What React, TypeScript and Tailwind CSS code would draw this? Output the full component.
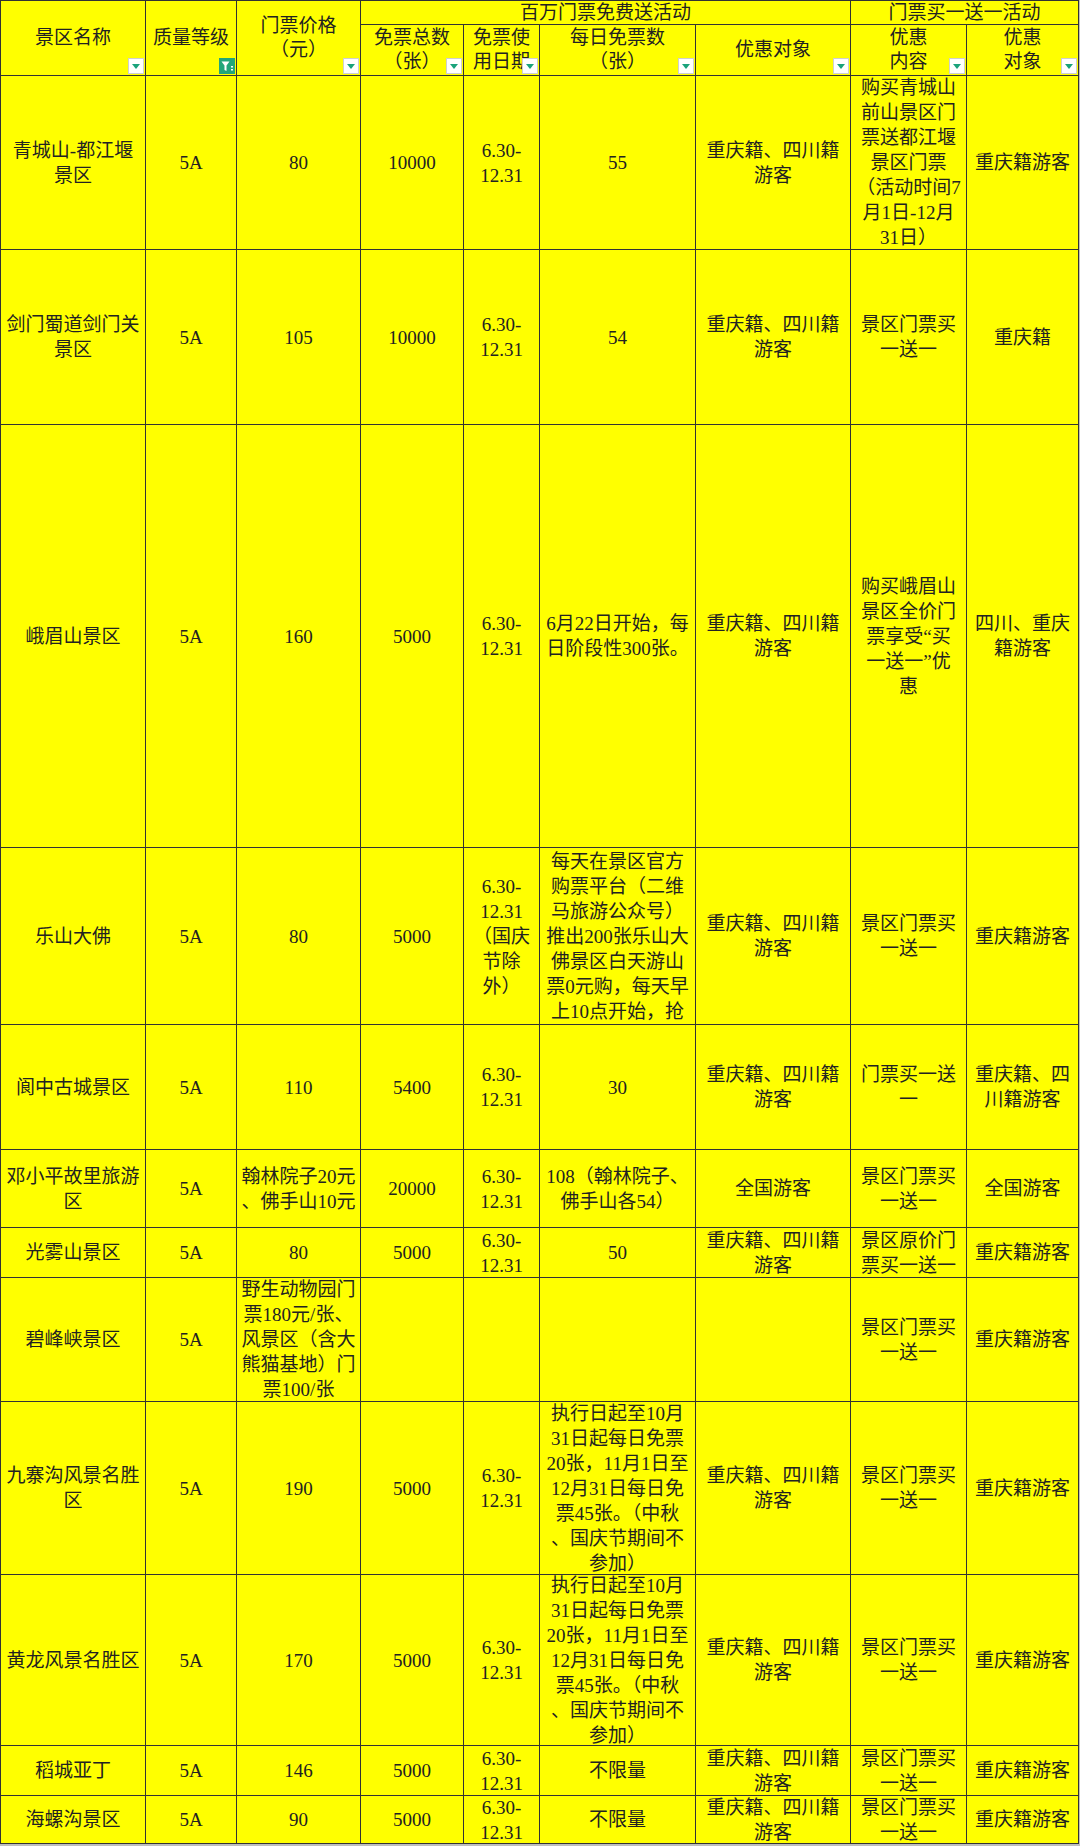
import React from "react";

type Row = string[][];

const rows: Row[] = [
  [["青城山-都江堰", "景区"], ["5A"], ["80"], ["10000"], ["6.30-", "12.31"], ["55"], ["重庆籍、四川籍", "游客"], ["购买青城山", "前山景区门", "票送都江堰", "景区门票", "（活动时间7", "月1日-12月", "31日）"], ["重庆籍游客"]],
  [["剑门蜀道剑门关", "景区"], ["5A"], ["105"], ["10000"], ["6.30-", "12.31"], ["54"], ["重庆籍、四川籍", "游客"], ["景区门票买", "一送一"], ["重庆籍"]],
  [["峨眉山景区"], ["5A"], ["160"], ["5000"], ["6.30-", "12.31"], ["6月22日开始，每", "日阶段性300张。"], ["重庆籍、四川籍", "游客"], ["购买峨眉山", "景区全价门", "票享受“买", "一送一”优", "惠"], ["四川、重庆", "籍游客"]],
  [["乐山大佛"], ["5A"], ["80"], ["5000"], ["6.30-", "12.31", "（国庆", "节除", "外）"], ["每天在景区官方", "购票平台（二维", "马旅游公众号）", "推出200张乐山大", "佛景区白天游山", "票0元购，每天早", "上10点开始，抢"], ["重庆籍、四川籍", "游客"], ["景区门票买", "一送一"], ["重庆籍游客"]],
  [["阆中古城景区"], ["5A"], ["110"], ["5400"], ["6.30-", "12.31"], ["30"], ["重庆籍、四川籍", "游客"], ["门票买一送", "一"], ["重庆籍、四", "川籍游客"]],
  [["邓小平故里旅游", "区"], ["5A"], ["翰林院子20元", "、佛手山10元"], ["20000"], ["6.30-", "12.31"], ["108（翰林院子、", "佛手山各54）"], ["全国游客"], ["景区门票买", "一送一"], ["全国游客"]],
  [["光雾山景区"], ["5A"], ["80"], ["5000"], ["6.30-", "12.31"], ["50"], ["重庆籍、四川籍", "游客"], ["景区原价门", "票买一送一"], ["重庆籍游客"]],
  [["碧峰峡景区"], ["5A"], ["野生动物园门", "票180元/张、", "风景区（含大", "熊猫基地）门", "票100/张"], [], [], [], [], ["景区门票买", "一送一"], ["重庆籍游客"]],
  [["九寨沟风景名胜", "区"], ["5A"], ["190"], ["5000"], ["6.30-", "12.31"], ["执行日起至10月", "31日起每日免票", "20张，11月1日至", "12月31日每日免", "票45张。（中秋", "、国庆节期间不", "参加）"], ["重庆籍、四川籍", "游客"], ["景区门票买", "一送一"], ["重庆籍游客"]],
  [["黄龙风景名胜区"], ["5A"], ["170"], ["5000"], ["6.30-", "12.31"], ["执行日起至10月", "31日起每日免票", "20张，11月1日至", "12月31日每日免", "票45张。（中秋", "、国庆节期间不", "参加）"], ["重庆籍、四川籍", "游客"], ["景区门票买", "一送一"], ["重庆籍游客"]],
  [["稻城亚丁"], ["5A"], ["146"], ["5000"], ["6.30-", "12.31"], ["不限量"], ["重庆籍、四川籍", "游客"], ["景区门票买", "一送一"], ["重庆籍游客"]],
  [["海螺沟景区"], ["5A"], ["90"], ["5000"], ["6.30-", "12.31"], ["不限量"], ["重庆籍、四川籍", "游客"], ["景区门票买", "一送一"], ["重庆籍游客"]],
];

function Dropdown() {
  return (
    <div className="absolute bottom-[1px] right-[1px] z-10 flex h-[16px] w-[16px] items-center justify-center border border-[#cfcfcf] bg-white">
      <svg width="10" height="7" viewBox="0 0 10 7">
        <polygon points="1,1 9,1 5,6" fill="#1aa37b" />
      </svg>
    </div>
  );
}

function FilterIcon() {
  return (
    <div className="absolute bottom-[1px] right-[1px] z-10 h-[16px] w-[16px] bg-[#21a67a]">
      <svg width="16" height="16" viewBox="0 0 16 16">
        <path d="M2.5 3.5 H10.5 L7.5 7.5 V13 L5.5 12 V7.5 Z" fill="#ffffff" />
        <rect x="12" y="8" width="2" height="1.5" fill="#ffffff" />
        <rect x="12" y="11" width="2" height="1.5" fill="#ffffff" />
      </svg>
    </div>
  );
}

function Lines({ lines, lh = "leading-[25px]" }: { lines: string[]; lh?: string }) {
  return (
    <>
      {lines.map((l, i) => (
        <div key={i} className={"whitespace-nowrap " + lh}>
          {l}
        </div>
      ))}
    </>
  );
}

const cellBase =
  "relative flex flex-col items-center justify-center overflow-hidden border-r border-b border-[#333333] bg-[#ffff00] text-center";

export default function App() {
  return (
    <div
      className="min-h-[1846px] w-[1080px] bg-[#bdbdbd] text-[19px] text-[#222222]"
      style={{ fontFamily: '"Liberation Serif", "Noto Sans CJK SC", serif' }}
    >
      <div className="grid w-[1079px] grid-cols-[145px_91px_124px_103px_76px_156px_155px_116px_112px] grid-rows-[24px_51px_174px_175px_423px_177px_125px_78px_50px_124px_173px_171px_50px_48px] border-l border-t border-[#333333]">
        {/* Header */}
        <div className={cellBase + " row-span-2"}>
          <Lines lines={["景区名称"]} lh="leading-[24px]" />
          <Dropdown />
        </div>
        <div className={cellBase + " row-span-2"}>
          <Lines lines={["质量等级"]} lh="leading-[24px]" />
          <FilterIcon />
        </div>
        <div className={cellBase + " row-span-2"}>
          <Lines lines={["门票价格", "（元）"]} lh="leading-[24px]" />
          <Dropdown />
        </div>
        <div className={cellBase + " col-span-4"}>
          <Lines lines={["百万门票免费送活动"]} lh="leading-[24px]" />
        </div>
        <div className={cellBase + " col-span-2"}>
          <Lines lines={["门票买一送一活动"]} lh="leading-[24px]" />
        </div>
        <div className={cellBase}>
          <Lines lines={["免票总数", "（张）"]} lh="leading-[24px]" />
          <Dropdown />
        </div>
        <div className={cellBase}>
          <Lines lines={["免票使", "用日期"]} lh="leading-[24px]" />
          <Dropdown />
        </div>
        <div className={cellBase}>
          <Lines lines={["每日免票数", "（张）"]} lh="leading-[24px]" />
          <Dropdown />
        </div>
        <div className={cellBase}>
          <Lines lines={["优惠对象"]} lh="leading-[24px]" />
          <Dropdown />
        </div>
        <div className={cellBase}>
          <Lines lines={["优惠", "内容"]} lh="leading-[24px]" />
          <Dropdown />
        </div>
        <div className={cellBase}>
          <Lines lines={["优惠", "对象"]} lh="leading-[24px]" />
          <Dropdown />
        </div>

        {/* Body */}
        {rows.map((row, ri) =>
          row.map((cell, ci) => (
            <div key={ri + "-" + ci} className={cellBase}>
              <Lines lines={cell} />
            </div>
          ))
        )}
      </div>
    </div>
  );
}
